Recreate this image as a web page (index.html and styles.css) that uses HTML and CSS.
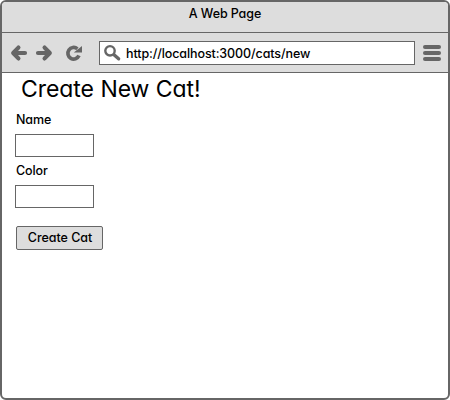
FILE: index.html
```html
<!DOCTYPE html>
<html lang="en">
<head>
<meta charset="utf-8">
<title>A Web Page</title>
<link rel="stylesheet" href="styles.css">
</head>
<body>
<div class="window">
  <header class="titlebar"><span class="title">A Web Page</span></header>
  <nav class="toolbar">
    <svg class="nav-icons" width="73" height="20" viewBox="0 0 73 20">
      <g fill="none" stroke="#666" stroke-width="4.2" stroke-linejoin="round">
        <g stroke-linecap="round">
          <path d="M8.4 4.6 3.2 10l5.2 5.4M4 10h11"/>
          <path d="M34.6 4.6 39.8 10l-5.2 5.4M39 10H28"/>
        </g>
        <path d="M67.4 5.8A5.8 5.8 0 1 0 69 12.6" stroke-width="3.7"/>
      </g>
      <path d="M72 3v6.6h-8.2z" fill="#666"/>
    </svg>
    <div class="address">
      <svg class="search" width="18" height="18" viewBox="0 0 18 18" fill="none" stroke="#666">
        <circle cx="6" cy="6.8" r="4.7" stroke-width="2.4"/>
        <path d="m10 10.8 4.6 4" stroke-width="3.4" stroke-linecap="round"/>
      </svg>
      <span class="url">http://localhost:3000/cats/new</span>
    </div>
    <div class="menu"><i></i><i></i><i></i></div>
  </nav>
  <main class="page">
    <h1>Create New Cat!</h1>
    <form>
      <label for="name">Name</label>
      <input id="name" type="text">
      <label for="color">Color</label>
      <input id="color" type="text">
      <button type="button">Create Cat</button>
    </form>
  </main>
</div>
</body>
</html>
```
FILE: styles.css
```css
* { box-sizing: border-box; }
body {
  margin: 0;
  background: #fff;
  color: #000;
  font: 500 12.5px/16px Inter, Lato, sans-serif;
  font-feature-settings: "cv11";
  letter-spacing: -0.1px;
}
.window {
  width: 450px;
  height: 400px;
  border: 2px solid #666;
  border-radius: 6px;
  overflow: hidden;
  background: #fff;
}
.titlebar {
  height: 31px;
  padding-top: 4px;
  background: #ddd;
  border-bottom: 1px solid #666;
  text-align: center;
}
.toolbar {
  display: flex;
  align-items: center;
  height: 40px;
  padding: 0 7px 0 8px;
  background: #ddd;
  border-bottom: 1px solid #666;
}
.nav-icons { flex: none; margin-right: 16px; }
.address {
  display: flex;
  align-items: center;
  width: 316px;
  height: 24px;
  padding-left: 4px;
  background: #fff;
  border: 1px solid #666;
}
.search { flex: none; margin-right: 4px; }
.url { padding-top: 2px; }
.menu { display: grid; gap: 2px; margin-left: 8px; }
.menu i { width: 18px; height: 4px; border-radius: 2px; background: #666; }
.page { padding: 2px 13px; }
h1 {
  margin: 0 0 8px;
  padding-left: 6px;
  font-size: 23px;
  font-weight: 440;
  line-height: 29px;
  letter-spacing: -0.05px;
}
form { display: flex; flex-direction: column; align-items: flex-start; }
label { height: 22px; padding-left: 1px; }
input {
  width: 79px;
  height: 23px;
  margin: 0 0 6px;
  padding: 0 4px;
  border: 1px solid #666;
  background: #fff;
  font: inherit;
}
button {
  width: 87px;
  height: 24px;
  margin: 12px 0 0 1px;
  padding: 0 0 0 1px;
  border: 1px solid #666;
  border-radius: 2px;
  background: #ddd;
  color: #000;
  font: inherit;
  font-feature-settings: inherit;
  letter-spacing: -0.05px;
}
```
